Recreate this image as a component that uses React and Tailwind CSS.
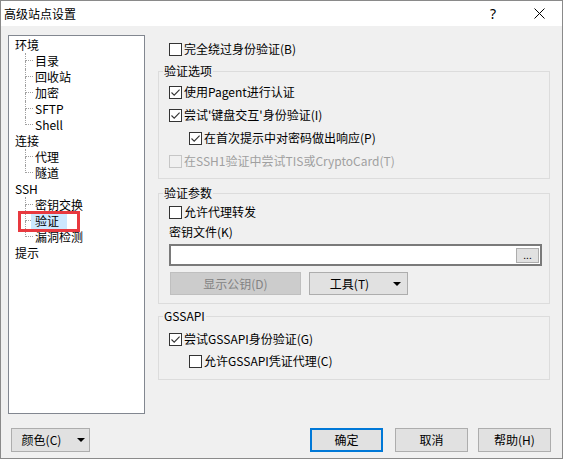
import React from "react";

const tree = [
  { label: "环境", children: ["目录", "回收站", "加密", "SFTP", "Shell"] },
  { label: "连接", children: ["代理", "隧道"] },
  { label: "SSH", children: ["密钥交换", "验证", "漏洞检测"] },
  { label: "提示", children: [] },
];

function Check({ checked, disabled }) {
  return (
    <span
      className={
        "w-[13px] h-[13px] border flex-none flex items-center justify-center " +
        (disabled ? "border-[#c6c6c6] bg-[#f0f0f0]" : "border-[#333333] bg-white")
      }
    >
      {checked && (
        <svg width="11" height="11" viewBox="0 0 11 11">
          <path d="M1.5 5.5 L4.2 8.2 L9.6 2.6" fill="none" stroke="#333333" strokeWidth="1.1" />
        </svg>
      )}
    </span>
  );
}

function CheckRow({ label, checked, disabled, indent }) {
  return (
    <div className={"flex items-center h-[16px] gap-[2px] " + (indent ? "ml-[20px]" : "")}>
      <Check checked={checked} disabled={disabled} />
      <span className={disabled ? "text-[#a0a0a0]" : "text-black"}>{label}</span>
    </div>
  );
}

function Group({ title, className, children }) {
  return (
    <fieldset className={"border border-[#dcdcdc] m-0 p-0 min-w-0 " + className}>
      <legend className="ml-[4px] px-[1px] leading-[16px]">{title}</legend>
      {children}
    </fieldset>
  );
}

function Arrow() {
  return (
    <svg width="8" height="4" viewBox="0 0 8 4" className="flex-none">
      <path d="M0 0 H8 L4 4 Z" fill="#000" />
    </svg>
  );
}

function TreeChild({ label, last, selected }) {
  return (
    <div className="flex h-[16px] pl-[10px]">
      <div className="w-[8px] flex flex-col flex-none">
        <div className="h-[8px] border-l border-b border-dotted border-[#a0a0a0]" />
        {!last && <div className="h-[8px] border-l border-dotted border-[#a0a0a0]" />}
      </div>
      {selected ? (
        <span className="-ml-[2px] pl-[4px] w-[36px] bg-[#cce8ff]">{label}</span>
      ) : (
        <span className="pl-[2px]">{label}</span>
      )}
    </div>
  );
}

function Button({ children, className }) {
  return (
    <div
      className={
        "h-[24px] flex items-center justify-center border border-[#adadad] bg-[#e1e1e1] " + className
      }
    >
      {children}
    </div>
  );
}

export default function App() {
  return (
    <div className="w-[563px] h-[459px] border border-[#8a8a8a] flex flex-col text-[12px] leading-[16px] text-black font-['Noto_Sans_CJK_SC','Noto_Sans',sans-serif] overflow-hidden">
      <div className="h-[25px] bg-white flex items-center flex-none">
        <span className="pl-[3px]">高级站点设置</span>
        <div className="ml-auto flex h-full">
          <div className="w-[46px] flex items-center justify-center text-[14px] font-['Noto_Sans',sans-serif]">?</div>
          <div className="w-[46px] flex items-center justify-center">
            <svg width="11" height="11" viewBox="0 0 11 11">
              <path d="M0.5 0.5 L10.5 10.5 M10.5 0.5 L0.5 10.5" stroke="#000" strokeWidth="1" />
            </svg>
          </div>
        </div>
      </div>

      <div className="flex-1 bg-[#f0f0f0] pl-[7px] pr-[6px] pt-[9px] flex flex-col">
        <div className="flex h-[379px]">
          <div className="w-[137px] h-full border border-[#828790] bg-white relative pt-[1px] pl-[6px] flex-none">
            {tree.map((g) => (
              <div key={g.label}>
                <div className="h-[16px]">{g.label}</div>
                {g.children.map((c, i) => (
                  <TreeChild
                    key={c}
                    label={c}
                    last={i === g.children.length - 1}
                    selected={c === "验证"}
                  />
                ))}
              </div>
            ))}
            <div className="absolute left-[9px] top-[175px] w-[62px] h-[21px] border-[3px] border-[#e8393f]" />
          </div>

          <div className="ml-[13px] w-[392px] flex flex-col">
            <div className="pt-[6px] pl-[11px]">
              <CheckRow label="完全绕过身份验证(B)" />
            </div>

            <Group title="验证选项" className="mt-[6px]">
              <div className="pl-[10px] pt-[5px] pb-[9px] flex flex-col gap-[7px]">
                <CheckRow label="使用Pagent进行认证" checked />
                <CheckRow label="尝试'键盘交互'身份验证(I)" checked />
                <CheckRow label="在首次提示中对密码做出响应(P)" checked indent />
                <CheckRow label="在SSH1验证中尝试TIS或CryptoCard(T)" disabled />
              </div>
            </Group>

            <Group title="验证参数" className="mt-[6px]">
              <div className="pl-[10px] pr-[7px] pt-[3px] pb-[8px] flex flex-col">
                <CheckRow label="允许代理转发" />
                <div className="mt-[4px] h-[16px]">密钥文件(K)</div>
                <div className="mt-[4px] h-[22px] border-2 border-[#7a7a7a] bg-white flex items-center justify-end pr-[1px]">
                  <div className="w-[23px] h-[15px] border border-[#adadad] bg-[#e1e1e1] flex items-end justify-center text-[10px] leading-[12px] pb-[1px]">
                    ...
                  </div>
                </div>
                <div className="mt-[6px] flex gap-[8px]">
                  <div className="ml-[1px] w-[131px] h-[23px] border border-[#bfbfbf] bg-[#cccccc] text-[#838383] flex items-center justify-center">
                    显示公钥(D)
                  </div>
                  <div className="w-[99px] h-[23px] border border-[#adadad] bg-[#e1e1e1] flex items-center pr-[6px]">
                    <span className="flex-1 text-center mr-[4px]">工具(T)</span>
                    <Arrow />
                  </div>
                </div>
              </div>
            </Group>

            <Group title="GSSAPI" className="mt-[4px]">
              <div className="pl-[10px] pt-[7px] pb-[10px] flex flex-col gap-[6px]">
                <CheckRow label="尝试GSSAPI身份验证(G)" checked />
                <CheckRow label="允许GSSAPI凭证代理(C)" indent />
              </div>
            </Group>
          </div>
        </div>

        <div className="mt-[14px] flex items-center">
          <Button className="ml-[3px] w-[79px] pr-[4px]">
            <span className="flex-1 text-center mr-[6px]">颜色(C)</span>
            <Arrow />
          </Button>
          <div className="ml-auto mr-[5px] flex">
            <div className="w-[73px] h-[24px] border-2 border-[#0078d7] bg-[#e1e1e1] flex items-center justify-center">
              确定
            </div>
            <Button className="ml-[12px] w-[73px]">取消</Button>
            <Button className="ml-[10px] w-[73px]">帮助(H)</Button>
          </div>
        </div>
      </div>
    </div>
  );
}
